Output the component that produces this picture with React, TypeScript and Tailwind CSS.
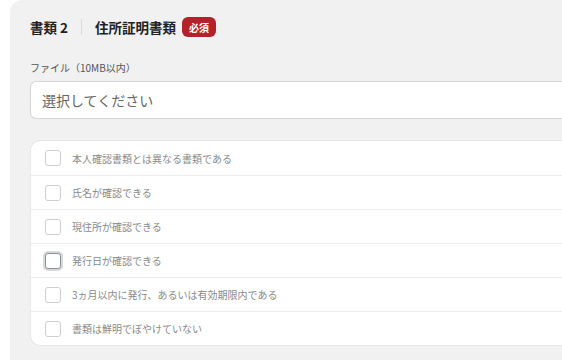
import { useState } from "react";

const checks = [
  "本人確認書類とは異なる書類である",
  "氏名が確認できる",
  "現住所が確認できる",
  "発行日が確認できる",
  "3ヵ月以内に発行、あるいは有効期限内である",
  "書類は鮮明でぼやけていない",
];

export default function App() {
  const [checked, setChecked] = useState<boolean[]>(checks.map(() => false));

  return (
    <div
      className="h-[360px] w-[562px] overflow-hidden bg-white pl-[10px]"
      style={{ fontFamily: '"Noto Sans CJK JP", "Noto Sans", sans-serif' }}
    >
      <div className="h-[400px] rounded-tl-xl bg-[#f1f1f1] pl-5 pt-[17px]">
        {/* Heading */}
        <div className="flex h-5 items-center text-[13.5px] font-bold text-[#222]">
          <span>書類 2</span>
          <span className="mx-[13px] h-4 w-px bg-[#dcdcdc]" />
          <span>住所証明書類</span>
          <span className="ml-[6px] flex h-5 items-center rounded-md bg-[#b3212a] px-[7px] text-[10px] font-bold text-white">
            必須
          </span>
        </div>

        {/* File */}
        <div className="mt-[25px] text-[10px] leading-3 text-[#555]">ファイル（10MB以内）</div>
        <div className="mt-[7px] flex h-[38px] items-center rounded-l-md border border-r-0 border-[#d6d6d6] bg-white pl-[11px] text-[14px] text-[#666]">
          選択してください
        </div>

        {/* Checklist */}
        <div className="mt-[21px] rounded-l-[10px] border border-r-0 border-[#e6e6e6] bg-white">
          {checks.map((label, i) => (
            <label
              key={label}
              className={`flex h-[34px] cursor-pointer items-center pl-[14px] ${i > 0 ? "border-t border-[#ececec]" : ""}`}
            >
              <span
                onClick={() => setChecked(checked.map((c, j) => (j === i ? !c : c)))}
                className={`h-4 w-4 rounded-[3px] border bg-white ${
                  i === 3 ? "border-[#8a9096] shadow-[0_0_0_2px_#d7dadd]" : "border-[#cfcfcf]"
                }`}
              />
              <span className="ml-[11px] text-[10px] text-[#8a8a8a]">{label}</span>
            </label>
          ))}
        </div>
      </div>
    </div>
  );
}
